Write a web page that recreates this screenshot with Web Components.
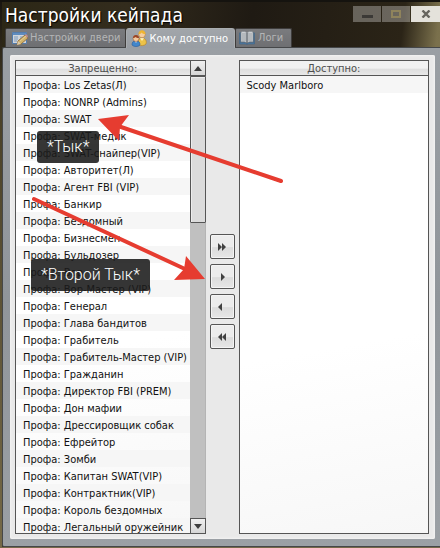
<!DOCTYPE html>
<html lang="ru">
<head>
<meta charset="utf-8">
<title>Настройки кейпада</title>
<style>
html{height:100%}
body{margin:0;height:100%;overflow:hidden;font-family:"DejaVu Sans Condensed","DejaVu Sans",sans-serif;font-size:11px;color:#111}
</style>
</head>
<body>
<keypad-window></keypad-window>
<script>
const define = (name, html, setup) => {
  const t = document.createElement('template');
  t.innerHTML = html;
  customElements.define(name, class extends HTMLElement {
    constructor() {
      super();
      this.attachShadow({mode: 'open'}).append(t.content.cloneNode(true));
    }
    connectedCallback() { if (setup) setup(this, this.shadowRoot); }
  });
};

define('window-controls', `
<style>
:host{display:flex;height:16px;gap:1px;margin-top:6px}
button{width:28px;height:16px;padding:0;border:0;background:#ffffff4d;display:grid;place-items:center}
button:first-child{border-radius:2px 0 0 2px}
button:last-child{background:#e4e2db;width:29px}
svg{display:block}
</style>
<button aria-label="Свернуть"><svg width="12" height="10"><path d="M1 6h11v3H1z" fill="#3b3936"/></svg></button>
<button aria-label="Развернуть"><svg width="10" height="8"><path d="M1 1h8v6H1z" fill="none" stroke="#8f835c" stroke-width="2"/></svg></button>
<button aria-label="Закрыть"><svg width="10" height="8"><path d="M1.500 .5l7 7M8.500 .5l-7 7" stroke="#67655e" stroke-width="2.400"/></svg></button>
`);

define('title-bar', `
<style>
:host{display:flex;justify-content:space-between;height:28px;padding-left:3px}
h1{margin:0;font:400 19px/30px "DejaVu Sans Condensed","DejaVu Sans",sans-serif;color:#fff;text-shadow:1px 1px 1px #000;white-space:nowrap}
</style>
<h1><slot></slot></h1>
<window-controls></window-controls>
`);

define('tab-button', `
<style>
:host{display:block}
button{display:flex;align-items:center;gap:2px;height:19px;padding:0 4px 0 6px;border:1px solid #3e3c3b;border-bottom:0;border-radius:2px 2px 0 0;background:linear-gradient(#7a7b7e,#6e6f72);font:11px/18px "DejaVu Sans Condensed","DejaVu Sans",sans-serif;color:#b4b5b6;white-space:nowrap}
:host([selected]){position:relative;z-index:1}
:host([selected]) button{height:20px;padding:0 6px 0 4px;background:linear-gradient(#a2a6aa,#989da3);border-color:#a9adb0;color:#fff;border-radius:3px 3px 0 0}
:host(:last-child) button{padding:0 8px 0 3px;gap:3px}
::slotted(svg){display:block;flex:none}
:host(:not([selected])) ::slotted(svg){opacity:.8}
</style>
<button role="tab"><slot name="icon"></slot><slot></slot></button>
`, (el, r) => r.querySelector('button').setAttribute('aria-selected', el.hasAttribute('selected')));

define('tab-strip', `
<style>:host{display:flex;height:19px;padding-left:3px;position:relative}</style>
<slot></slot>
`);

define('list-scrollbar', `
<style>
:host{display:flex;flex-direction:column;width:16px;flex:none;box-sizing:border-box;background:#c0c0c0;border-right:1px solid #b4b4b4}
button{width:16px;height:16px;padding:0;box-sizing:border-box;border:1px solid #555;background:linear-gradient(#efefef,#d6d6d6);display:grid;place-items:center;flex:none}
.thumb{height:147px;box-sizing:border-box;width:16px;border:1px solid #555;border-radius:0 0 1px 1px;background:#dbdbdb;box-shadow:inset 1px 1px #ececec;flex:none}
.down{margin-top:auto}
</style>
<button aria-label="Вверх"><svg width="8" height="5"><path d="M0 5l4-5 4 5z" fill="#3d3d3d"/></svg></button>
<div class="thumb"></div>
<button class="down" aria-label="Вниз"><svg width="8" height="5"><path d="M0 0h8L4 5z" fill="#3d3d3d"/></svg></button>
`);

define('access-list', `
<style>
:host{display:flex;flex:1;min-width:0;min-height:0}
section{flex:1;min-width:0;display:flex;flex-direction:column;box-sizing:border-box;border:1px solid #555;background:linear-gradient(170deg,#fff 60%,#f7f7f7);overflow:hidden}
:host([scroll]) section{border-right:0}
h2{margin:0;flex:none;height:15px;box-sizing:border-box;border-bottom:1px solid #555;font:11px/16px "DejaVu Sans Condensed","DejaVu Sans",sans-serif;color:#4e4e4e;text-align:center;background:linear-gradient(#f1f1f1 0 50%,#dfdfdf 60%,#e8e8e8)}
ul{margin:0;padding:0;list-style:none;flex:1;min-height:0;overflow:hidden}
li{height:17px;line-height:19px;padding-left:7px;white-space:nowrap}
li:nth-child(odd){background:#f6f6f6}
</style>
<section><h2></h2><ul></ul></section>
`, (el, r) => {
  r.querySelector('h2').textContent = el.getAttribute('heading');
  r.querySelector('ul').append(...el.getAttribute('items').split('|').map(s => {
    const li = document.createElement('li');
    li.textContent = (el.getAttribute('prefix') || '') + s;
    return li;
  }));
  if (el.hasAttribute('scroll')) r.append(document.createElement('list-scrollbar'));
});

define('transfer-buttons', `
<style>
:host{display:flex;flex-direction:column;gap:5px;width:25px;flex:none;padding:174px 4px 0}
button{width:25px;height:25px;padding:0;border:1px solid #555;border-radius:2px;background:linear-gradient(#ececec 0 50%,#dcdcdc 55%,#e6e6e6);box-shadow:inset 0 0 0 1px #f4f4f4;display:grid;place-items:center}
path{fill:#414141}
</style>
<button aria-label="Добавить все"><svg width="10" height="8"><path d="M1 0l4 4-4 4zM5 0l4 4-4 4z"/></svg></button>
<button aria-label="Добавить"><svg width="10" height="8"><path d="M4 0l4 4-4 4z"/></svg></button>
<button aria-label="Убрать"><svg width="10" height="8"><path d="M5 0L1 4l4 4z"/></svg></button>
<button aria-label="Убрать все"><svg width="10" height="8"><path d="M5 0L1 4l4 4zM9 0L5 4l4 4z"/></svg></button>
`);

define('callout-label', `
<style>
:host{position:absolute;display:block;box-sizing:border-box;height:32px;padding:0 10px;border-radius:3px;background:#1a1a1ae0;color:#fff;font:300 16px/32px Roboto,"Open Sans",sans-serif;white-space:nowrap}
</style>
<slot></slot>
`);

define('keypad-window', `
<style>
:host{display:flex;flex-direction:column;height:100%;box-sizing:border-box;position:relative;overflow:hidden;border-top:2px solid #15130f;padding:0 0 1px 2px;
background:linear-gradient(#77694a,#77694a) bottom/100% 1px no-repeat,linear-gradient(#191510,#4a4128 20%,#756947) left/2px 100% no-repeat,linear-gradient(97deg,#2c2716 0,#332c1d 25%,#1f1a13 50%,#2b2417 80%,#7a704c 87%,#8b815c) #332c1d}
title-bar{margin-top:-2px}
.panel{flex:1;min-height:0;display:flex;box-sizing:border-box;padding:7px 5px 7px 7px;background:linear-gradient(#9a9fa4,#90959a 50%,#9ba0a5);border:1px solid #454749;border-right:0;border-radius:2px 0 0 2px}
.content{flex:1;min-width:0;display:flex;box-sizing:border-box;padding:5px 6px 5px 5px;background:#e9e9e9;border-radius:2px;box-shadow:inset 0 0 2px 1px #f3f3f3}
.arrows{position:absolute;left:0;top:-2px;pointer-events:none}
.one{left:37px;top:129px}
.two{left:31px;top:257px}
</style>
<title-bar>Настройки кейпада</title-bar>
<tab-strip role="tablist">
  <tab-button>
    <svg slot="icon" width="16" height="16" viewBox="0 0 16 16"><path d="M.5 2.500h14v11H.5z" fill="#e8edf4" stroke="#4d7fba"/><path d="M1 3h13v2H1z" fill="#5a91d0"/><path d="M2 7h4M2 9h4M2 11h3M8 7h5M8 9h4" stroke="#7da4d2"/><path d="M5 15l1-4 7-6 3 3-7 6z" fill="#ecc467" stroke="#9a7334"/><path d="M5 15l1-4 3 3z" fill="#f3dfbd"/><path d="M8 11l6-5" stroke="#fbe6a2"/><path d="M13 5l1-1 2 2-1 2z" fill="#d89292"/></svg>
    Настройки двери</tab-button>
  <tab-button selected>
    <svg slot="icon" width="17" height="17" viewBox="0 0 17 17"><path d="M7 15c-1-4 1-7 4-7 4 0 5 4 4 6-2 2-5 2-8 1z" fill="#edc348" stroke="#b6852c" stroke-width=".7"/><path d="M9 8l2 3 2-3z" fill="#fff3ba"/><circle cx="11" cy="4.500" r="3.300" fill="#f5cea0" stroke="#b87a32" stroke-width=".6"/><path d="M7.500 4c0-5 7-5 7 0-2 0-3-.5-4-1.500-.5 1-1.500 1.500-3 1.500z" fill="#efb532"/><path d="M1 15c0-3 1-4 4-4s4 1 4 4c-2 2-6 2-8 0z" fill="#4287cb" stroke="#2b5e9a" stroke-width=".6"/><path d="M4 11l1 2 1-2z" fill="#fff"/><circle cx="5" cy="8.500" r="3" fill="#f4c99b" stroke="#8f4d2a" stroke-width=".5"/><path d="M2 8c0-4 6-4 6 0-2 0-3-.5-3.500-1-.5.7-1.500 1-2.500 1z" fill="#9b4525"/></svg>
    Кому доступно</tab-button>
  <tab-button>
    <svg slot="icon" width="16" height="16" viewBox="0 0 16 16"><path d="M.5 3l1-.5v10h5L8 14l1.500-1.500h5v-10l1 .5v11H9l-1 .8-1-.8H.5z" fill="#437cae" stroke="#345f88" stroke-width=".6"/><path d="M2 2c2.500-.7 4.500-.5 6 1v10c-1.500-1.300-3.500-1.500-6-1zM14 2c-2.500-.7-4.500-.5-6 1v10c1.500-1.300 3.500-1.500 6-1z" fill="#edf0f2" stroke="#79838c" stroke-width=".6"/><path d="M3 4h4M3 6h4M3 8h4M3 10h4M9 4h4M9 6h4M9 8h4M9 10h4" stroke="#9ba3aa"/><path d="M8 3v10" stroke="#5e666e"/></svg>
    Логи</tab-button>
</tab-strip>
<div class="panel"><div class="content">
  <access-list scroll heading="Запрещенно:" prefix="Профа: " items="Los Zetas(Л)|NONRP (Admins)|SWAT|SWAT-медик|SWAT-снайпер(VIP)|Авторитет(Л)|Агент FBI (VIP)|Банкир|Бездомный|Бизнесмен|Бульдозер|Вор|Вор-Мастер (VIP)|Генерал|Глава бандитов|Грабитель|Грабитель-Мастер (VIP)|Гражданин|Директор FBI (PREM)|Дон мафии|Дрессировщик собак|Ефрейтор|Зомби|Капитан SWAT(VIP)|Контрактник(VIP)|Король бездомных|Легальный оружейник"></access-list>
  <transfer-buttons></transfer-buttons>
  <access-list heading="Доступно:" items="Scody Marlboro"></access-list>
</div></div>
<callout-label class="one">*Тык*</callout-label>
<callout-label class="two">*Второй Тык*</callout-label>
<svg class="arrows" width="440" height="548" aria-hidden="true"><g stroke="#e63c30" stroke-width="4" stroke-linecap="round"><path d="M281 181L118 126M34 199L185 269"/></g><path d="M98 119l31-4-9 12-1 14zM205 279l-19-23-2 13-10 11z" fill="#e63c30"/></svg>
`);
</script>
</body>
</html>
